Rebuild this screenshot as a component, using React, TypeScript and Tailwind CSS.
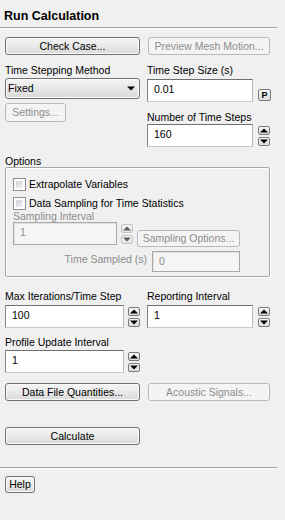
import React from "react";

// small reusable pieces, win7 look
const Btn = ({ children, disabled, className = "" }: { children: React.ReactNode; disabled?: boolean; className?: string }) => (
  <div
    className={`flex items-center justify-center rounded-[3px] border ${
      disabled
        ? "border-[#b6babd] bg-[#f4f4f4] text-[#8d8d8d]"
        : "border-[#707070] bg-linear-to-b from-[#f5f5f5] via-[#e9e9e9] to-[#d9d9d9] shadow-[inset_0_0_0_1px_#fbfbfb] text-black"
    } ${className}`}
  >
    {children}
  </div>
);

const Field = ({ value, className = "", disabled }: { value: string; className?: string; disabled?: boolean }) => (
  <div
    className={`border pl-[6px] pt-[3px] ${
      disabled
        ? "border-[#a9a9a9] bg-[#f5f5f5] text-[#8d8d8d] shadow-[inset_1px_1px_0_#e0e0e0]"
        : "border-t-[#6f6f6f] border-l-[#858585] border-r-[#b9b9b9] border-b-[#c9c9c9] bg-white"
    } ${className}`}
  >
    {value}
  </div>
);

const Arrow = ({ up }: { up?: boolean }) => (
  <svg width="8" height="5" viewBox="0 0 8 5">
    {up ? <polygon points="0,4.5 4,0.5 8,4.5" fill="#000" /> : <polygon points="0,0.5 8,0.5 4,4.5" fill="#000" />}
  </svg>
);

const Spin = ({ disabled }: { disabled?: boolean }) => (
  <div className="flex flex-col gap-[2px] pt-[2px]">
    {[true, false].map((up) => (
      <div
        key={String(up)}
        className={`w-[12px] h-[9px] rounded-[2px] border flex items-center justify-center bg-linear-to-b from-[#f7f7f7] to-[#dcdcdc] ${
          disabled ? "border-[#a8a8a8] opacity-60" : "border-[#7a7a7a]"
        }`}
      >
        <Arrow up={up} />
      </div>
    ))}
  </div>
);

const Check = ({ label }: { label: string }) => (
  <div className="flex items-center h-[13px]">
    <div className="w-[13px] h-[13px] border border-[#8e8f8f] bg-white p-[2px]">
      <div className="w-full h-full bg-linear-to-br from-[#cbcfd5] to-[#f6f6f6]" />
    </div>
    <span className="ml-[3px]">{label}</span>
  </div>
);

const Sep = () => <div className="h-px w-[277px] bg-[#a0a0a0] shadow-[0_1px_0_#ffffff] mb-px" />;

export default function App() {
  return (
    <div className="w-[285px] h-[520px] overflow-hidden bg-[#f0f0f0] text-black text-[10.5px] leading-[13px] font-['Liberation_Sans',Arial,sans-serif]">
      <div className="h-[27px] pl-[4px] pt-[9px] text-[12.5px] leading-[15px] font-bold">Run Calculation</div>
      <Sep />

      <div className="px-[5px]">
        <div className="flex mt-[9px]">
          <Btn className="w-[135px] h-[18px]">Check Case...</Btn>
          <Btn disabled className="ml-[8px] w-[122px] h-[18px]">Preview Mesh Motion...</Btn>
        </div>

        <div className="flex mt-[9px]">
          <div className="w-[135px]">
            <div className="h-[13px]">Time Stepping Method</div>
            <div className="mt-[1px] h-[21px] rounded-[3px] border border-[#707070] bg-linear-to-b from-[#f5f5f5] to-[#dadada] shadow-[inset_0_0_0_1px_#fbfbfb] flex items-center justify-between pl-[2px] pr-[4px]">
              <span>Fixed</span>
              <Arrow />
            </div>
            <Btn disabled className="mt-[4px] w-[61px] h-[19px]">Settings...</Btn>
          </div>
          <div className="ml-[7px]">
            <div className="h-[13px]">Time Step Size (s)</div>
            <div className="flex mt-[2px]">
              <Field value="0.01" className="w-[106px] h-[23px]" />
              <div className="ml-[5px] mt-[10px] w-[13px] h-[12px] rounded-[2px] border border-[#7a7a7a] bg-linear-to-b from-[#f7f7f7] to-[#dcdcdc] text-[9px] leading-[10px] font-bold flex items-center justify-center">
                P
              </div>
            </div>
            <div className="h-[13px] mt-[9px]">Number of Time Steps</div>
            <div className="flex">
              <Field value="160" className="w-[106px] h-[23px]" />
              <div className="ml-[5px]">
                <Spin />
              </div>
            </div>
          </div>
        </div>

        <div className="mt-[8px] h-[12px]">Options</div>
        <div className="w-[265px] border border-[#a6a6a6] shadow-[inset_1px_1px_0_#ffffff,1px_1px_0_#ffffff] rounded-[2px] pl-[7px] pt-[10px] pb-[4px]">
          <Check label="Extrapolate Variables" />
          <div className="mt-[6px]">
            <Check label="Data Sampling for Time Statistics" />
          </div>
          <div className="h-[12px] text-[#8d8d8d]">Sampling Interval</div>
          <div className="flex">
            <Field disabled value="1" className="w-[104px] h-[23px]" />
            <div className="ml-[4px]">
              <Spin disabled />
            </div>
            <Btn disabled className="ml-[4px] mt-[8px] w-[103px] h-[17px]">Sampling Options...</Btn>
          </div>
          <div className="flex mt-[4px]">
            <div className="w-[134px] text-right text-[#8d8d8d] pt-[2px]">Time Sampled (s)</div>
            <Field disabled value="0" className="ml-[5px] w-[88px] h-[21px] border-[#8f8f8f]" />
          </div>
        </div>

        <div className="flex mt-[13px]">
          <div className="w-[142px]">
            <div className="h-[13px]">Max Iterations/Time Step</div>
            <div className="flex mt-[2px]">
              <Field value="100" className="w-[119px] h-[23px]" />
              <div className="ml-[4px]">
                <Spin />
              </div>
            </div>
            <div className="h-[13px] mt-[8px]">Profile Update Interval</div>
            <div className="flex mt-[1px]">
              <Field value="1" className="w-[119px] h-[23px]" />
              <div className="ml-[4px]">
                <Spin />
              </div>
            </div>
          </div>
          <div>
            <div className="h-[13px]">Reporting Interval</div>
            <div className="flex mt-[2px]">
              <Field value="1" className="w-[106px] h-[23px]" />
              <div className="ml-[5px]">
                <Spin />
              </div>
            </div>
          </div>
        </div>

        <div className="flex mt-[10px]">
          <Btn className="w-[135px] h-[18px]">Data File Quantities...</Btn>
          <Btn disabled className="ml-[8px] w-[122px] h-[18px]">Acoustic Signals...</Btn>
        </div>

        <Btn className="mt-[26px] w-[135px] h-[18px]">Calculate</Btn>
      </div>

      <div className="mt-[22px]">
        <Sep />
      </div>
      <div className="px-[5px] mt-[8px]">
        <Btn className="w-[30px] h-[17px]">Help</Btn>
      </div>
    </div>
  );
}
